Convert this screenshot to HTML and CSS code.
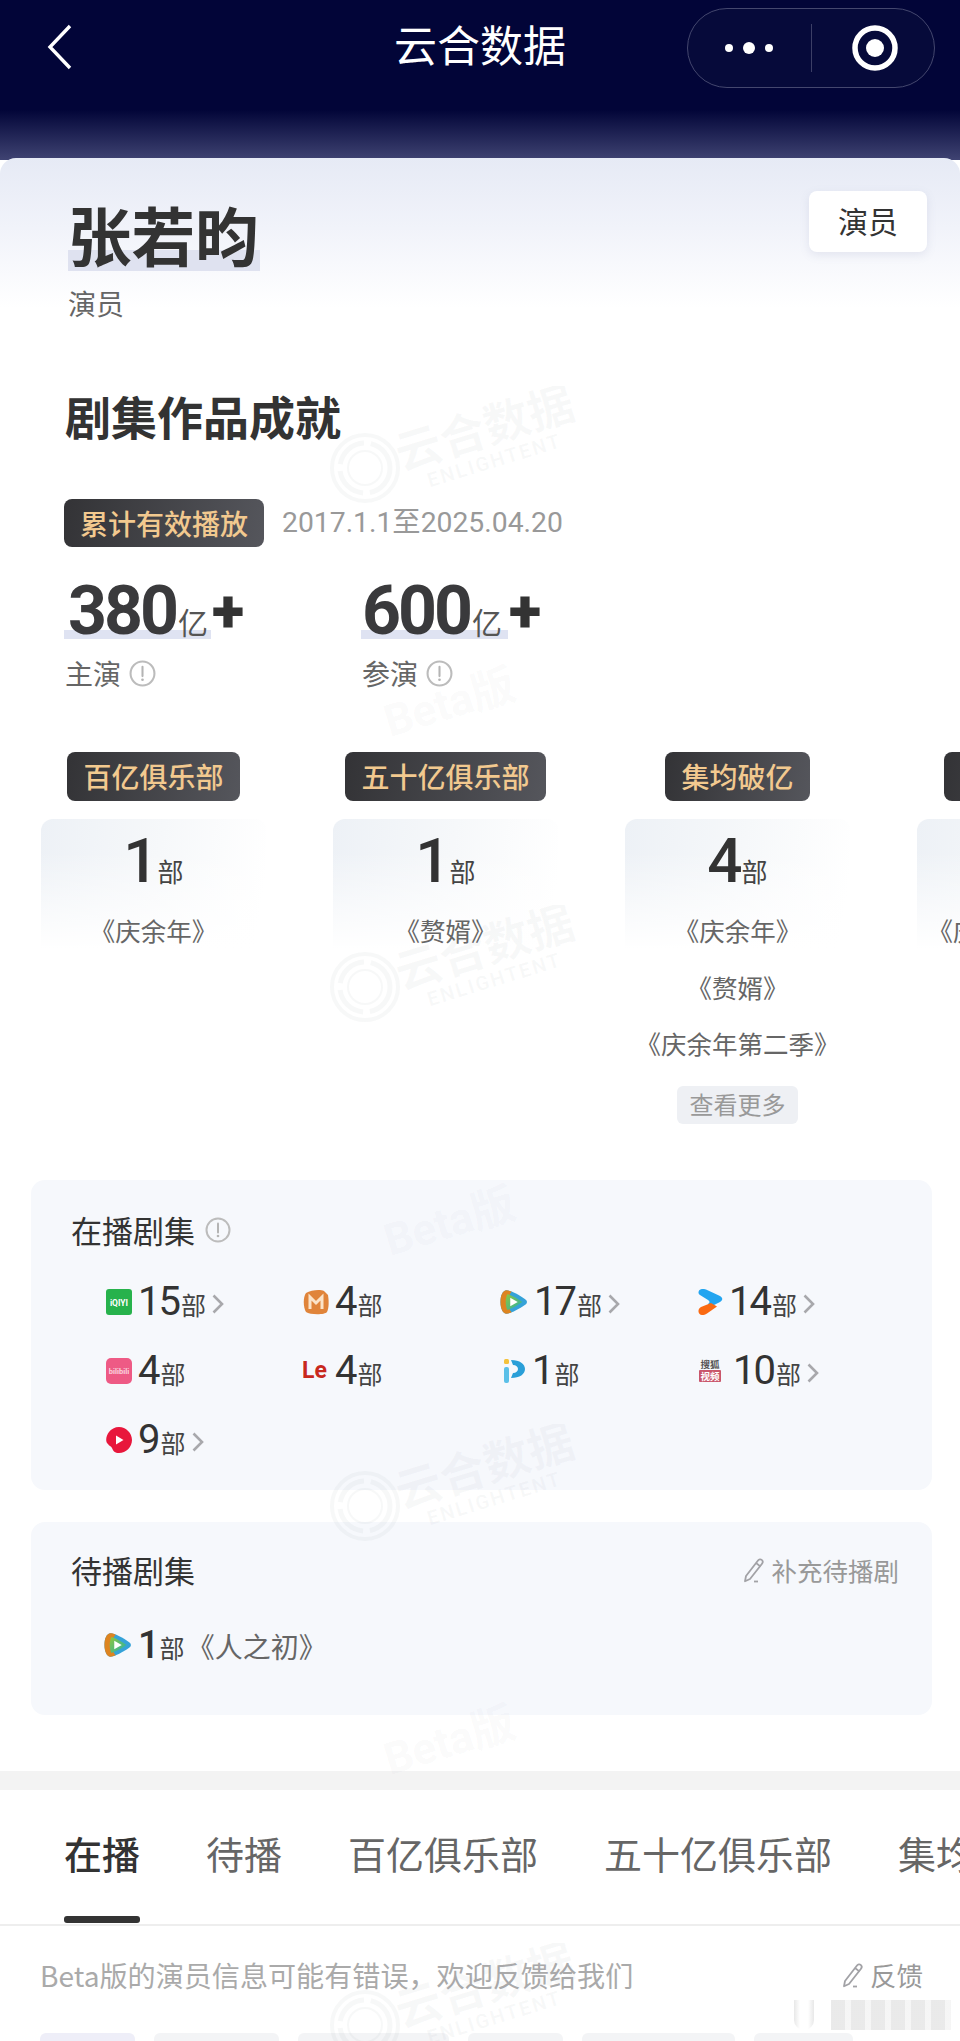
FILE: index.html
```html
<!DOCTYPE html>
<html lang="zh-CN">
<head>
<meta charset="utf-8">
<title>云合数据</title>
<link rel="stylesheet" href="styles.css">
</head>
<body>
<svg class="defs" width="0" height="0" aria-hidden="true">
  <defs>
    <symbol id="i-info" viewBox="0 0 26 26"><circle cx="13" cy="13" r="11.5" fill="none" stroke="#bcbcbc" stroke-width="2"/><path d="M13 6.5v9" stroke="#b4b4b4" stroke-width="2" stroke-linecap="round"/><circle cx="13" cy="19" r="1.3" fill="#b4b4b4"/></symbol>
    <symbol id="i-chev" viewBox="0 0 12 20"><path d="M1.5 1.5 10 10 1.5 18.5" fill="none" stroke="#a8a8ac" stroke-width="2.6"/></symbol>
    <symbol id="i-pen" viewBox="0 0 24 28"><path d="M4 20 16 4.5c1-1.3 2.6-1.5 3.7-.6s1.3 2.5.3 3.8L8 23l-5 2.2z" fill="none" stroke="#a2a2a6" stroke-width="1.8" stroke-linejoin="round"/><path d="M14 7l4.500 3.500" stroke="#a2a2a6" stroke-width="1.600"/><path d="M12 25.500h4" stroke="#a2a2a6" stroke-width="1.800"/></symbol>
    <linearGradient id="g-tx" x1="0" y1="0" x2="1" y2="1"><stop offset="0" stop-color="#8fc63e"/><stop offset="1" stop-color="#27b1a8"/></linearGradient>
    <symbol id="i-tx" viewBox="0 0 30 28">
      <path d="M7 1.500C3 1.500 .5 7 .5 14S3 26.500 7 26.500c4 0 13-4.500 20-9.500 2.500-1.800 2.500-4.200 0-6C20 6 11 1.500 7 1.500z" fill="#35a2d8"/>
      <path d="M7 1.500C3 1.500 .5 7 .5 14S3 26.500 7 26.500c1.500 0 3.500-.5 5.500-1.500C8 21 7 8 12.500 3 10.500 2 8.500 1.500 7 1.500z" fill="#dd8420"/>
      <path d="M8 5.500C5.500 9 5.500 19 8 22.500c5-1.500 11-5 16-8.500-5-3.500-11-7-16-8.500z" fill="url(#g-tx)"/>
      <path d="M11 9.500v9l8-4.500z" fill="#fff"/>
    </symbol>
    <symbol id="wm" viewBox="0 0 280 380">
      <g fill="none" stroke="#8a8f9c" stroke-opacity=".065">
        <circle cx="45" cy="82" r="33" stroke-width="4"/><circle cx="45" cy="82" r="25" stroke-width="5" stroke-dasharray="34 7"/><circle cx="45" cy="82" r="17" stroke-width="2"/>
      </g>
      <g fill="#8a8f9c" fill-opacity=".06" transform="rotate(-17 170 60)">
        <text class="wm-cn" x="170" y="58" text-anchor="middle">云合数据</text>
        <text class="wm-en" x="170" y="82" text-anchor="middle">ENLIGHTENT</text>
      </g>
      <g fill="#8a8f9c" fill-opacity=".055" transform="rotate(-17 130 318)">
        <text class="wm-beta" x="130" y="332" text-anchor="middle">Beta版</text>
      </g>
    </symbol>
  </defs>
</svg>
<div class="page">
  <header class="nav">
    <svg class="back" width="26" height="46" viewBox="0 0 26 46"><path d="M23 2 3 23l20 21" fill="none" stroke="#fff" stroke-width="3.400"/></svg>
    <div class="nav-title">云合数据</div>
    <div class="capsule">
      <svg width="50" height="14" viewBox="0 0 50 14"><circle cx="5" cy="7" r="4" fill="#fff"/><circle cx="25" cy="7" r="6" fill="#fff"/><circle cx="45" cy="7" r="4" fill="#fff"/></svg>
      <span class="capsule-line"></span>
      <svg width="48" height="48" viewBox="0 0 48 48"><circle cx="24" cy="24" r="20" fill="none" stroke="#fff" stroke-width="5.500"/><circle cx="24" cy="24" r="9" fill="#fff"/></svg>
    </div>
  </header>

  <main class="card">
    <section class="head">
      <div class="head-left">
        <h1 class="name">张若昀</h1>
        <div class="role">演员</div>
      </div>
      <div class="badge">演员</div>
    </section>

    <h2 class="sec-title">剧集作品成就</h2>

    <div class="tag-row">
      <span class="tag">累计有效播放</span>
      <span class="date">2017.1.1至2025.04.20</span>
    </div>

    <div class="stats">
      <div class="stat">
        <div class="stat-val"><span class="hl"><b>380</b><i>亿</i></span><em>+</em></div>
        <div class="stat-label">主演<svg width="27" height="27"><use href="#i-info"/></svg></div>
      </div>
      <div class="stat">
        <div class="stat-val"><span class="hl"><b>600</b><i>亿</i></span><em>+</em></div>
        <div class="stat-label">参演<svg width="27" height="27"><use href="#i-info"/></svg></div>
      </div>
    </div>

    <div class="clubs">
      <div class="club">
        <span class="tag tag-club">百亿俱乐部</span>
        <div class="club-box">
          <div class="club-num"><b>1</b><span>部</span></div>
          <div class="club-item">《庆余年》</div>
        </div>
      </div>
      <div class="club">
        <span class="tag tag-club">五十亿俱乐部</span>
        <div class="club-box">
          <div class="club-num"><b>1</b><span>部</span></div>
          <div class="club-item">《赘婿》</div>
        </div>
      </div>
      <div class="club">
        <span class="tag tag-club">集均破亿</span>
        <div class="club-box">
          <div class="club-num"><b>4</b><span>部</span></div>
          <div class="club-item">《庆余年》</div>
          <div class="club-item">《赘婿》</div>
          <div class="club-item">《庆余年第二季》</div>
          <div class="more">查看更多</div>
        </div>
      </div>
      <div class="club">
        <span class="tag tag-club tag-blank"></span>
        <div class="club-box">
          <div class="club-num"></div>
          <div class="club-item">《庆余年第二季》</div>
        </div>
      </div>
    </div>

    <section class="panel panel-live">
      <div class="panel-title">在播剧集<svg width="26" height="26"><use href="#i-info"/></svg></div>
      <div class="plats">
        <div class="plat">
          <svg class="logo" viewBox="0 0 26 28"><rect y="1" width="26" height="26" rx="3" fill="#27b24c"/><text class="logo-iq" x="13" y="17.500" text-anchor="middle">iQIYI</text></svg>
          <b>15</b><span>部</span><svg class="chev"><use href="#i-chev"/></svg>
        </div>
        <div class="plat">
          <svg class="logo" viewBox="0 0 26 28"><path d="M3 5c5-3 14-4 18-2l4 4c1 6 1 13-1 17-2 3-17 3-21 0C0 19 0 9 3 5z" fill="#e0843a"/><path d="M7 21V9l6 6 6-6v12" fill="none" stroke="#fbe3c8" stroke-width="3"/></svg>
          <b>4</b><span>部</span>
        </div>
        <div class="plat">
          <svg class="logo logo-wide" viewBox="0 0 30 28"><use href="#i-tx"/></svg>
          <b>17</b><span>部</span><svg class="chev"><use href="#i-chev"/></svg>
        </div>
        <div class="plat">
          <svg class="logo" viewBox="0 0 26 28"><path d="M5 1c-3 0-5 4-2 6l8 5c2 1 2 3 0 4l2 3 10-5c3-2 3-4 0-6L9 1.500C8 1 6 1 5 1z" fill="#23a5f0"/><path d="M14 15 4 19c-4 2-3 8 1 8 2 0 3-.5 5-1.500l10-7z" fill="#fa6a12"/></svg>
          <b>14</b><span>部</span><svg class="chev"><use href="#i-chev"/></svg>
        </div>
        <div class="plat">
          <svg class="logo" viewBox="0 0 26 28"><rect y="1" width="26" height="26" rx="5" fill="#ee5a85"/><text class="logo-bl" x="13" y="17" text-anchor="middle">bilibili</text></svg>
          <b>4</b><span>部</span>
        </div>
        <div class="plat">
          <svg class="logo" viewBox="0 0 26 28"><text class="logo-le" x="-1" y="21">Le</text></svg>
          <b>4</b><span>部</span>
        </div>
        <div class="plat">
          <svg class="logo" viewBox="0 0 26 28"><rect x="4" y="2" width="5" height="5" rx="1.500" fill="#f4c23c"/><rect x="4" y="10" width="5" height="16" rx="2" fill="#5bc0e8"/><path d="M11 3c9 0 14 4 14 9s-5 9-14 9l2-5c3 0 5-2 5-4s-2-4-5-4z" fill="#2a9fd8"/></svg>
          <b>1</b><span>部</span>
        </div>
        <div class="plat">
          <svg class="logo logo-sohu" viewBox="0 0 26 28"><text class="logo-sh" x="13" y="11" text-anchor="middle">搜狐</text><rect x="2" y="13" width="22" height="12" rx="1" fill="#c9566b"/><text class="logo-sh logo-sh-w" x="13" y="23" text-anchor="middle">视频</text></svg>
          <b>10</b><span>部</span><svg class="chev"><use href="#i-chev"/></svg>
        </div>
        <div class="plat">
          <svg class="logo" viewBox="0 0 26 28"><path d="M13 1c7 0 13 6 13 13s-6 13-13 13c-4 0-6-2-7-5-1-2-3-2-4-4C-1 16 0 10 3 6c2-3 6-5 10-5z" fill="#e8173c"/><path d="M10 9.500v9l7.500-4.500z" fill="#fff"/></svg>
          <b>9</b><span>部</span><svg class="chev"><use href="#i-chev"/></svg>
        </div>
      </div>
    </section>

    <section class="panel panel-wait">
      <div class="panel-head">
        <div class="panel-title">待播剧集</div>
        <div class="link"><svg width="24" height="28"><use href="#i-pen"/></svg>补充待播剧</div>
      </div>
      <div class="wait-row">
        <svg class="logo" viewBox="0 0 30 28"><use href="#i-tx"/></svg>
        <b>1</b><span>部</span><span class="wait-name">《人之初》</span>
      </div>
    </section>

    <div class="band"></div>

    <nav class="tabs">
      <div class="tab active">在播</div>
      <div class="tab">待播</div>
      <div class="tab">百亿俱乐部</div>
      <div class="tab">五十亿俱乐部</div>
      <div class="tab">集均破亿</div>
    </nav>

    <div class="notice">
      <span>Beta版的演员信息可能有错误，欢迎反馈给我们</span>
      <span class="link"><svg width="24" height="28"><use href="#i-pen"/></svg>反馈</span>
    </div>

    <div class="chips">
      <span class="chip chip-first"></span>
      <span class="chip chip-125"></span>
      <span class="chip chip-151"></span>
      <span class="chip chip-95"></span>
      <span class="chip chip-153"></span>
      <span class="chip chip-99"></span>
    </div>
  </main>

  <div class="wm-layer" aria-hidden="true">
    <svg class="wm-tile"><use href="#wm"/></svg>
    <svg class="wm-tile"><use href="#wm"/></svg>
    <svg class="wm-tile"><use href="#wm"/></svg>
    <svg class="wm-tile"><use href="#wm"/></svg>
  </div>
  <div class="stamp" aria-hidden="true"><span class="stamp-a"></span><span class="stamp-b"></span></div>
</div>
</body>
</html>
```
FILE: styles.css
```css
* { box-sizing: border-box; }
html, body { margin: 0; padding: 0; background: #fff; }
body { font-family: "Noto Sans CJK SC", "Noto Sans", sans-serif; color: #333; }
.defs { position: absolute; }
.page {
  position: relative;
  width: 960px;
  height: 2041px;
  padding-top: 8px;
  overflow: hidden;
  background: linear-gradient(#020538 0, #020538 110px, #3f4372 160px) no-repeat;
  background-size: 100% 160px;
}

/* nav */
.nav {
  display: grid;
  grid-template-columns: 248px 1fr 248px;
  align-items: center;
  height: 80px;
  padding: 0 25px;
}
.back { justify-self: start; margin: -2px 0 0 22px; }
.nav-title { color: #fff; font-size: 43px; line-height: 60px; text-align: center; margin-top: -11px; }
.capsule {
  justify-self: end;
  width: 248px;
  height: 80px;
  border: 1.500px solid #44476e;
  border-radius: 40px;
  background: #060a3a;
  display: flex;
  align-items: center;
  padding-left: 36px;
}
.capsule-line { width: 1px; height: 48px; background: #3c3f66; margin: 0 39px 0 37px; }

/* card */
.card {
  margin-top: 70px;
  border-radius: 16px 16px 0 0;
  background: linear-gradient(#e6eaf5 0, #f1f3fa 70px, #fff 150px) no-repeat;
  background-size: 100% 170px;
  background-color: #fff;
  height: 1883px;
  overflow: hidden;
}
.head { display: flex; justify-content: space-between; align-items: flex-start; padding: 0 33px 0 68px; }
.head-left { padding-top: 44px; }
.name {
  display: block;
  width: 192px;
  height: 69px;
  margin: 0;
  font-size: 63.500px;
  line-height: 62px;
  font-weight: 700;
  color: #333;
  white-space: nowrap;
  background: linear-gradient(#dfe2f0, #dfe2f0) left bottom / 100% 21px no-repeat;
}
.role { margin-top: 14px; font-size: 28px; line-height: 36px; color: #666; }
.badge {
  margin-top: 33px;
  width: 118px;
  height: 61px;
  border-radius: 8px;
  background: #fff;
  box-shadow: 0 3px 10px rgba(120, 130, 170, .15);
  font-size: 30px;
  line-height: 59px;
  text-align: center;
  color: #333;
}
.sec-title { margin: 64px 0 0 65px; font-size: 46px; line-height: 60px; font-weight: 700; color: #333; }
.tag-row { display: flex; align-items: center; gap: 18px; margin: 54px 0 0 64px; }
.tag {
  display: inline-block;
  height: 48px;
  padding: 0 16px;
  border-radius: 8px;
  background: linear-gradient(100deg, #333336, #55565c);
  color: #f2c98f;
  font-size: 28px;
  line-height: 48px;
  font-weight: 500;
  white-space: nowrap;
}
.date { font-family: Roboto, "Noto Sans CJK SC", sans-serif; font-size: 28.300px; line-height: 48px; color: #999; }

.stats { display: flex; margin: 38px 0 0 64px; }
.stat { width: 297px; }
.stat + .stat .hl { padding-left: 1px; }
.stat-val { display: flex; align-items: flex-start; height: 54px; }
.hl {
  display: inline-flex;
  align-items: baseline;
  width: 147px;
  height: 54px;
  padding: 0 0 0 4px;
  background: linear-gradient(#dfe3f2, #dfe3f2) left 45px / 100% 9px no-repeat;
}
.hl b { font-family: Roboto, sans-serif; font-size: 68px; line-height: 52px; font-weight: 700; color: #3a3a3c; letter-spacing: -3px; }
.hl i { font-style: normal; font-size: 30px; line-height: 52px; color: #555; margin-left: 2px; }
.stat-val em { font-family: Roboto, sans-serif; font-style: normal; font-weight: 900; font-size: 60px; line-height: 54px; color: #333; margin-left: 1px; }
.stat-label { display: flex; align-items: center; gap: 8px; margin-top: 16px; padding-left: 1px; font-size: 28px; line-height: 36px; color: #666; }

/* clubs */
.clubs { display: flex; gap: 67px; margin: 61px 0 0 41px; height: 372px; }
.club { flex: none; width: 225px; display: flex; flex-direction: column; align-items: center; }
.tag-club { height: 49px; line-height: 49px; font-size: 28px; padding: 0 16px; }
.tag-blank { width: 172px; }
.club-box {
  align-self: stretch;
  margin-top: 18px;
  padding-top: 12px;
  border-radius: 12px 12px 0 0;
  background:
    linear-gradient(rgba(255, 255, 255, 0) 25%, #fff 100%),
    linear-gradient(100deg, #edf1f6 0, #f6f8fa 50%, #fff 95%);
  background-repeat: no-repeat;
  background-size: 100% 130px;
  display: flex;
  flex-direction: column;
  align-items: center;
}
.club-num { display: flex; align-items: baseline; line-height: 60px; height: 60px; margin-bottom: 11px; }
.club-num b { font-family: Roboto, sans-serif; font-weight: 500; font-size: 62px; color: #333; letter-spacing: -4px; }
.club-num span { font-size: 26px; color: #444; margin-left: 3px; }
.club-item { font-size: 25.500px; line-height: 56.500px; color: #666; white-space: nowrap; }
.more { margin-top: 14px; width: 121px; height: 38px; border-radius: 6px; background: #eef0f4; color: #999; font-size: 24px; line-height: 36px; text-align: center; }

/* panels */
.panel { margin: 0 28px 0 31px; border-radius: 14px; background: #f6f8fc; padding: 30px 0 0 40px; }
.panel-live { margin-top: 56px; height: 310px; }
.panel-wait { margin-top: 32px; height: 193px; padding-top: 28px; }
.panel-title { display: flex; align-items: center; gap: 10px; font-size: 31px; line-height: 40px; color: #333; }
.plats { display: grid; grid-template-columns: repeat(4, 197px); grid-auto-rows: 69px; margin: 17px 0 0 35px; }
.plat { display: flex; align-items: baseline; }
.logo { width: 26px; height: 28px; align-self: center; margin-right: 6px; flex: none; }
.logo-wide { width: 28px; margin-right: 6px; }
.logo-sohu { margin-right: 10px; }
.plat b, .wait-row b { font-family: Roboto, sans-serif; font-weight: 400; font-size: 40px; line-height: 69px; color: #333; letter-spacing: -2px; }
.plat span, .wait-row span { font-size: 25px; color: #444; margin-left: 2px; }
.chev { width: 12px; height: 20px; align-self: center; margin-left: 6px; margin-top: 4px; }
.logo-iq { font: 700 8.500px Roboto, sans-serif; fill: #fff; }
.logo-le { font: 700 23px Roboto, sans-serif; fill: #c8281e; }
.logo-bl { font: 700 7.500px Roboto, sans-serif; fill: #fbd4df; }
.logo-sh { font: 700 9.500px "Noto Sans CJK SC", sans-serif; fill: #555; }
.logo-sh-w { fill: #fff; }
.panel-head { display: flex; justify-content: space-between; align-items: center; padding-right: 33px; }
.link { display: flex; align-items: center; gap: 5px; font-size: 25.500px; line-height: 40px; color: #999; }
.wait-row { display: flex; align-items: baseline; margin: 35px 0 0 33px; height: 40px; }
.wait-row b { line-height: 40px; font-weight: 500; font-size: 38px; }
.wait-row .logo { width: 28px; margin-right: 6px; }
.wait-row .wait-name { font-size: 28px; color: #666; margin-left: 2px; }

/* tabs */
.band { margin-top: 56px; height: 19px; background: #f3f3f3; }
.tabs { display: flex; gap: 66px; height: 136px; padding: 38px 0 0 64px; border-bottom: 2px solid #eee; overflow: hidden; }
.tab { flex: none; font-size: 38px; line-height: 50px; color: #666; white-space: nowrap; }
.tab::after { content: ""; display: block; height: 7px; margin-top: 38px; border-radius: 3px; }
.tab.active { color: #333; font-weight: 500; }
.tab.active::after { background: #333; }
.notice { display: flex; justify-content: space-between; align-items: center; margin-top: 29px; padding: 0 37px 0 40px; font-size: 28.100px; line-height: 40px; color: #aaa; }
.notice .link { font-size: 26.500px; }
.chips { display: flex; gap: 19px; margin: 38px 0 0 40px; }
.chip { flex: none; height: 30px; width: 95px; background: #f3f4f6; border-radius: 6px 6px 0 0; }
.chip-first { background: #eeeef8; }
.chip-125 { width: 125px; }
.chip-151 { width: 151px; }
.chip-95 { width: 95px; }
.chip-153 { width: 153px; }
.chip-99 { width: 99px; }

/* watermark overlay */
.wm-layer { position: absolute; left: 320px; top: 386px; display: flex; flex-direction: column; pointer-events: none; }
.wm-tile { width: 280px; height: 380px; margin-bottom: 139px; overflow: visible; flex: none; }
.wm-cn { font: 700 46px "Noto Sans CJK SC", sans-serif; }
.wm-en { font: 700 20px Roboto, sans-serif; letter-spacing: 2px; }
.wm-beta { font: 700 44px Roboto, "Noto Sans CJK SC", sans-serif; }

.stamp { position: absolute; left: 794px; top: 2000px; display: flex; gap: 17px; }
.stamp-a { width: 20px; height: 30px; border-radius: 0 0 10px 10px; background: linear-gradient(90deg, #e8e8e8, #fff 30%, #fff 70%, #e8e8e8); }
.stamp-b { width: 120px; height: 30px; background: repeating-linear-gradient(90deg, #e6e6e6 0 14px, #f4f4f4 14px 20px); opacity: .85; }
```
